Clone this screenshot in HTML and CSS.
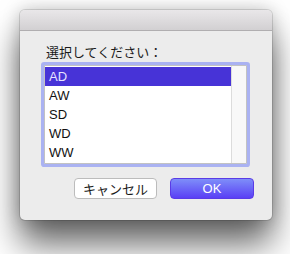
FILE: index.html
```html
<!DOCTYPE html>
<html>
  <head>
    <meta charset="utf-8">
    <title>選択</title>
    <link rel="stylesheet" href="styles.css">
  </head>
  <body>
    <div class="dlg">
      <div class="ttl"></div>
      <div class="cnt">
        <div class="lbl">選択してください：</div>
        <div class="lst">
          <div class="itm">
            <div class="row sel">AD</div>
            <div class="row">AW</div>
            <div class="row">SD</div>
            <div class="row">WD</div>
            <div class="row">WW</div>
          </div>
          <div class="scr"></div>
        </div>
        <div class="btns">
          <div class="btn">キャンセル</div>
          <div class="btn ok">OK</div>
        </div>
      </div>
    </div>
  </body>
</html>
```

FILE: styles.css
```css
html {
  height: 100%;
}
body {
  margin: 0;
  padding: 10px 0 34px 20px;
  min-height: 210px;
  background: #ffffff;
  font-family: "Liberation Sans", "Noto Sans CJK JP", sans-serif;
  font-size: 13px;
  color: #1a1a1a;
}
.dlg {
  width: 252px;
  height: 210px;
  border-radius: 5px;
  background: #ececec;
  overflow: hidden;
  box-shadow: 0 0 0 1px rgba(0,0,0,0.12), 0 24px 34px rgba(0,0,0,0.6), 0 0 18px rgba(0,0,0,0.22);
}
.ttl {
  height: 20px;
  background: linear-gradient(#e9e7e9, #d2d0d2);
  border-bottom: 1px solid #b0aeb0;
}
.cnt {
  padding: 13px 18px 0 24px;
}
.lbl {
  margin-left: 2px;
  height: 16px;
  line-height: 16px;
  font-family: "Noto Sans CJK JP", sans-serif;
  font-size: 13px;
}
.lst {
  display: flex;
  margin-top: 5px;
  width: 201px;
  height: 97px;
  border: 1px solid #c2c2c2;
  background: #ffffff;
  box-shadow: 0 0 0 3px #aab2f2;
  border-radius: 1px;
}
.itm {
  flex: 1;
  padding-top: 1px;
}
.row {
  height: 19px;
  line-height: 19px;
  padding-left: 4px;
  font-size: 13px;
  color: #111111;
}
.sel {
  background: #4733d7;
  color: #e6e4ff;
}
.scr {
  width: 14px;
  background: #f8f8f8;
  border-left: 1px solid #dcdcdc;
}
.btns {
  display: flex;
  justify-content: flex-end;
  gap: 13px;
  margin-top: 14px;
}
.btn {
  width: 81px;
  height: 19px;
  line-height: 19px;
  text-align: center;
  border: 1px solid #bcbcbc;
  border-radius: 4px;
  background: #ffffff;
  font-family: "Noto Sans CJK JP", sans-serif;
  font-size: 13px;
}
.ok {
  width: 82px;
  border-color: #5a3be6;
  background: linear-gradient(#7e8ef9, #5a3ff5);
  color: #ffffff;
  font-family: "Liberation Sans", sans-serif;
}
```
